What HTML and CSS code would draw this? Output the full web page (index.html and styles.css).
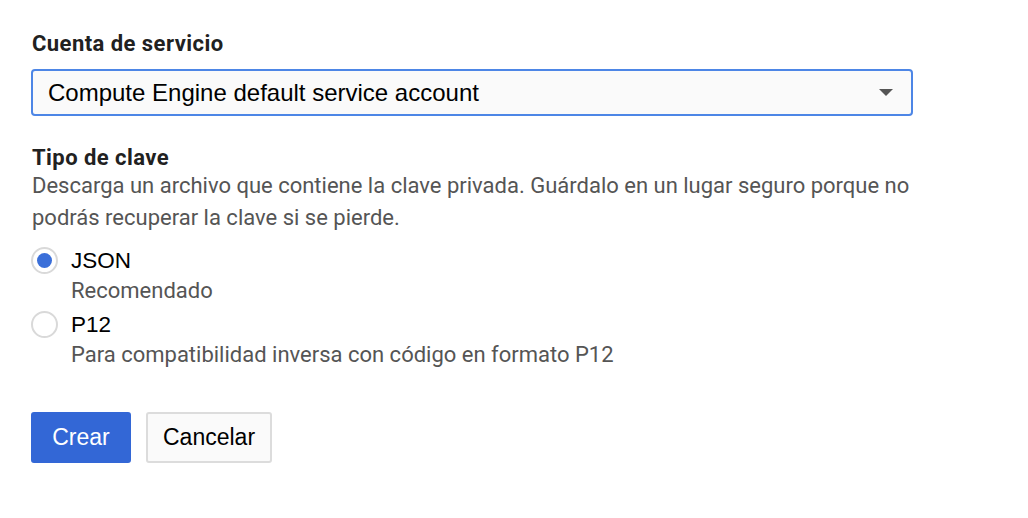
FILE: index.html
```html
<!DOCTYPE html>
<html lang="es">
<head>
<meta charset="utf-8">
<link rel="stylesheet" href="styles.css">
</head>
<body>
<div class="form">
  <div class="field">
    <div class="label">Cuenta de servicio</div>
    <div class="select">
      <span class="select-text">Compute Engine default service account</span>
      <span class="arrow"></span>
    </div>
  </div>
  <div class="field keytype">
    <div class="label">Tipo de clave</div>
    <p class="desc">Descarga un archivo que contiene la clave privada. Guárdalo en un lugar seguro porque no podrás recuperar la clave si se pierde.</p>
    <div class="options">
      <div class="option">
        <span class="radio checked"></span>
        <div class="option-text">
          <div class="option-label">JSON</div>
          <div class="option-hint">Recomendado</div>
        </div>
      </div>
      <div class="option">
        <span class="radio"></span>
        <div class="option-text">
          <div class="option-label">P12</div>
          <div class="option-hint">Para compatibilidad inversa con código en formato P12</div>
        </div>
      </div>
    </div>
  </div>
  <div class="actions">
    <button class="btn primary">Crear</button>
    <button class="btn">Cancelar</button>
  </div>
</div>
</body>
</html>
```

FILE: styles.css
```css
html, body {
  margin: 0;
  padding: 0;
  background: #ffffff;
}

.form {
  padding: 32px 0 0 31px;
  width: 882px;
  font-family: Roboto, "Liberation Sans", sans-serif;
}

.label {
  font-size: 22px;
  line-height: 24px;
  font-weight: 700;
  letter-spacing: 0.45px;
  color: #212121;
  padding-left: 1px;
}

.select {
  margin-top: 13px;
  height: 43px;
  border: 2px solid #4d86e6;
  border-radius: 4px;
  background: #fafafa;
  display: flex;
  align-items: center;
  justify-content: space-between;
  padding: 0 18px 0 15px;
}

.select-text {
  font-family: "Liberation Sans", Arial, sans-serif;
  font-size: 24px;
  color: #000;
}

.arrow {
  width: 0;
  height: 0;
  border-left: 7px solid transparent;
  border-right: 7px solid transparent;
  border-top: 7px solid #555;
}

.keytype {
  margin-top: 30px;
}

.desc {
  margin: 0;
  font-size: 22px;
  line-height: 32px;
  color: #555;
  padding-left: 1px;
}

.options {
  margin-top: 12px;
  display: flex;
  flex-direction: column;
  gap: 4px;
}

.option {
  display: flex;
  align-items: flex-start;
  gap: 13px;
}

.radio {
  flex: none;
  box-sizing: border-box;
  width: 27px;
  height: 27px;
  border: 2px solid #d9d9d9;
  border-radius: 50%;
  margin-top: 1px;
  display: flex;
  align-items: center;
  justify-content: center;
  background: #fff;
}

.radio.checked::after {
  content: "";
  width: 15px;
  height: 15px;
  border-radius: 50%;
  background: #3b6fd9;
}

.option-label {
  font-family: "Liberation Sans", Arial, sans-serif;
  font-size: 22.5px;
  line-height: 30px;
  color: #000;
}

.option-hint {
  font-size: 22px;
  line-height: 30px;
  color: #555;
}

.actions {
  margin-top: 42px;
  display: flex;
  gap: 15px;
}

.btn {
  font-family: "Liberation Sans", Arial, sans-serif;
  font-size: 23px;
  height: 51px;
  min-width: 100px;
  padding: 0 15px;
  border-radius: 3px;
  border: 2px solid #dcdcdc;
  background: #fafafa;
  color: #000;
}

.btn.primary {
  background: #3367d6;
  border-color: #3367d6;
  color: #fff;
}
```
